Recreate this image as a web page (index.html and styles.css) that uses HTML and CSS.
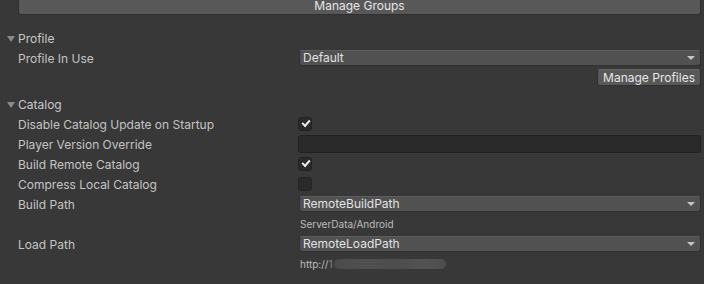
FILE: index.html
```html
<!DOCTYPE html>
<html lang="en">
<head>
    <meta charset="UTF-8">
    <title>Addressable Asset Settings</title>
    <link rel="stylesheet" href="styles.css">
</head>
<body>

<div class="inspector">
    <!-- Manage Groups -->
    <button class="btn btn-wide">Manage Groups</button>

    <!-- Profile -->
    <div class="foldout">
        <span class="arrow"></span>Profile
    </div>
    <div class="row">
        <span class="label">Profile In Use</span>
        <div class="value">
            <div class="dropdown">Default<span class="caret"></span></div>
        </div>
    </div>
    <div class="row-right">
        <button class="btn btn-small">Manage Profiles</button>
    </div>

    <!-- Catalog -->
    <div class="foldout foldout-gap">
        <span class="arrow"></span>Catalog
    </div>
    <div class="row">
        <span class="label">Disable Catalog Update on Startup</span>
        <div class="value"><span class="check on"></span></div>
    </div>
    <div class="row">
        <span class="label">Player Version Override</span>
        <div class="value"><div class="textfield"></div></div>
    </div>
    <div class="row">
        <span class="label">Build Remote Catalog</span>
        <div class="value"><span class="check on"></span></div>
    </div>
    <div class="row">
        <span class="label">Compress Local Catalog</span>
        <div class="value"><span class="check"></span></div>
    </div>
    <div class="row">
        <span class="label">Build Path</span>
        <div class="value">
            <div class="dropdown">RemoteBuildPath<span class="caret"></span></div>
        </div>
    </div>
    <div class="row">
        <span class="label"></span>
        <div class="value"><span class="hint">ServerData/Android</span></div>
    </div>
    <div class="row">
        <span class="label">Load Path</span>
        <div class="value">
            <div class="dropdown">RemoteLoadPath<span class="caret"></span></div>
        </div>
    </div>
    <div class="row">
        <span class="label"></span>
        <div class="value"><span class="hint">http://<span class="t">1</span></span><span class="blur"></span></div>
    </div>
</div>

</body>
</html>
```

FILE: styles.css
```css
/* Estilos gerais */
body {
    margin: 0;
    background: #383838;
    font-family: Inter, "Noto Sans", sans-serif;
    font-size: 12px;
    color: #c4c4c4;
    overflow: hidden;
}

.inspector {
    padding: 0 3px 0 0;
}

/* Botoes */
.btn {
    font-family: Inter, "Noto Sans", sans-serif;
    font-size: 12px;
    color: #e6e6e6;
    background: #585858;
    border: 1px solid #303030;
    border-top-color: #656565;
    border-radius: 3px;
    padding: 0;
    cursor: pointer;
}

.btn-wide {
    display: block;
    width: calc(100% - 18px);
    margin-left: 18px;
    height: 15px;
    border-top: none;
    border-radius: 0 0 3px 3px;
    line-height: 11px;
    padding: 0 0 3px;
}

.btn-small {
    height: 17px;
    padding: 0 5px;
    line-height: 15px;
    background: #585858;
}

.row-right {
    display: flex;
    justify-content: flex-end;
    margin-top: 1px;
}

/* Foldouts */
.foldout {
    height: 20px;
    display: flex;
    align-items: center;
    margin-top: 13px;
    color: #c8c8c8;
}

.foldout-gap {
    margin-top: 8px;
}

.arrow {
    width: 0;
    height: 0;
    border-left: 4px solid transparent;
    border-right: 4px solid transparent;
    border-top: 6px solid #8a8a8a;
    margin: 1px 3px 0 7px;
}

/* Linhas */
.row {
    height: 20px;
    display: flex;
    align-items: center;
}

.label {
    width: 280px;
    padding-left: 18px;
    flex: none;
}

.value {
    flex: 1;
    display: flex;
    align-items: center;
}

.dropdown {
    flex: 1;
    height: 16px;
    margin-left: 1px;
    background: #515151;
    border: 1px solid #303030;
    border-top-color: #5e5e5e;
    border-radius: 3px;
    box-sizing: border-box;
    padding-left: 3px;
    line-height: 14px;
    color: #e2e2e2;
    display: flex;
    justify-content: space-between;
    align-items: center;
}

.caret {
    width: 0;
    height: 0;
    border-left: 4px solid transparent;
    border-right: 4px solid transparent;
    border-top: 4px solid #c4c4c4;
    margin-right: 5px;
}

.textfield {
    flex: 1;
    height: 18px;
    background: #2a2a2a;
    border: 1px solid #212121;
    border-radius: 3px;
    box-sizing: border-box;
}

.check {
    width: 14px;
    height: 14px;
    box-sizing: border-box;
    background: #2a2a2a;
    border: 1px solid #222;
    border-radius: 3px;
    position: relative;
}

.check.on::after {
    content: "";
    position: absolute;
    left: 3px;
    top: 2px;
    width: 6px;
    height: 3px;
    border-left: 2px solid #e8e8e8;
    border-bottom: 2px solid #e8e8e8;
    transform: rotate(-48deg);
}

.hint {
    font-size: 10px;
    color: #bdbdbd;
    padding-left: 2px;
}

.t {
    color: #8a8a8a;
}

.blur {
    width: 112px;
    height: 10px;
    margin-left: 1px;
    border-radius: 5px;
    background: linear-gradient(to right, #4a4a4a, #505050 30%, #4c4c4c 55%, #525252 80%, #4d4d4d);
}
```
